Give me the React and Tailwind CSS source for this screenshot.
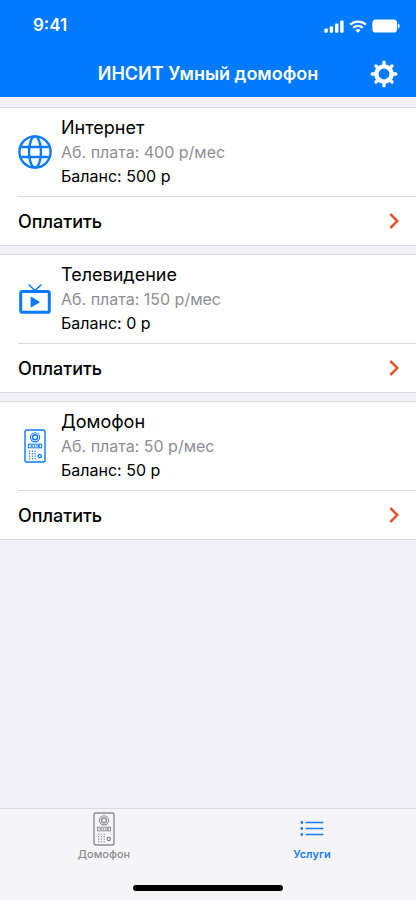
const services = [
  { id: "internet", name: "Интернет", fee: "400 р/мес", balance: "500 р" },
  { id: "tv", name: "Телевидение", fee: "150 р/мес", balance: "0 р" },
  { id: "intercom", name: "Домофон", fee: "50 р/мес", balance: "50 р" },
];

const GlobeIcon = () => (
  <svg width="34" height="34" viewBox="0 0 34 34" fill="none" stroke="currentColor" strokeWidth="2.4">
    <circle cx="17" cy="17" r="15.6" />
    <ellipse cx="17" cy="17" rx="6" ry="15.6" />
    <path d="M3.2 12h27.6M3.2 22h27.6" />
  </svg>
);

const TvIcon = () => (
  <svg width="34" height="34" viewBox="0 0 34 34" fill="none" stroke="currentColor">
    <path d="M11 3l6 5.5L23 3" strokeWidth="1.6" strokeLinecap="round" />
    <rect x="2.7" y="9.5" width="28.6" height="20.8" rx="1.6" strokeWidth="3" />
    <path d="M13.4 15.8v8.6l7.4-4.3z" fill="currentColor" strokeWidth="1.6" strokeLinejoin="round" />
  </svg>
);

const IntercomIcon = () => (
  <svg width="22" height="34" viewBox="0 0 22 34" fill="none" stroke="currentColor">
    <rect x="1" y="1" width="20" height="32" rx="1.8" strokeWidth="1.4" />
    <circle cx="11" cy="8.3" r="4.6" strokeWidth="1.1" />
    <circle cx="11" cy="8.3" r="2.5" strokeWidth="1.4" />
    <rect x="4.4" y="15.2" width="13.2" height="3.6" strokeWidth="1" />
    <path d="M6.6 17h2.2M9.8 17h1.4M12.4 17h1.2M15 15.4v3.2" strokeWidth="1.6" />
    <path
      d="M5.6 21.6v9M8.4 21.6v9M11.2 21.6v9"
      strokeWidth="1.2"
      strokeDasharray="1.2 1.3"
    />
    <circle cx="15.8" cy="27" r="1.6" strokeWidth="1.3" />
  </svg>
);

const ListIcon = () => (
  <svg width="24" height="34" viewBox="0 0 24 34" fill="none" stroke="currentColor" strokeLinecap="round">
    <path d="M6.2 10.5h16.6M6.2 16.5h16.6M6.2 22.5h16.6" strokeWidth="1.6" />
    <path d="M1.8 10.5h.01M1.8 16.5h.01M1.8 22.5h.01" strokeWidth="2.8" />
  </svg>
);

const GearIcon = () => (
  <svg width="28" height="28" viewBox="0 0 28 28" fill="none" stroke="currentColor">
    <circle cx="14" cy="14" r="7.6" strokeWidth="4.4" />
    <path
      d="M14 5V2.2M14 23v2.8M5 14H2.2M23 14h2.8M7.6 7.6L6 6M20.4 7.6L22 6M7.6 20.4L6 22M20.4 20.4L22 22"
      strokeWidth="3.4"
      strokeLinecap="round"
    />
  </svg>
);

const ChevronIcon = () => (
  <svg width="12" height="18" viewBox="0 0 12 18" fill="none" stroke="currentColor" strokeWidth="2.5">
    <path d="M2.3 2L9.3 9l-7 7" />
  </svg>
);

const SignalIcon = () => (
  <svg width="20" height="13" viewBox="0 0 20 13" fill="currentColor">
    <rect x="0.4" y="8.6" width="3.4" height="4.2" rx="1" />
    <rect x="5.7" y="6.2" width="3.4" height="6.6" rx="1" />
    <rect x="11" y="3.6" width="3.4" height="9.2" rx="1" />
    <rect x="16.2" y="0.6" width="3.4" height="12.2" rx="1" />
  </svg>
);

const WifiIcon = () => (
  <svg width="18" height="13" viewBox="0 0 18 13" fill="none" stroke="currentColor" strokeWidth="2.3">
    <path d="M1.2 4.7a11.2 11.2 0 0 1 15.6 0" />
    <path d="M4.2 7.8a6.8 6.8 0 0 1 9.6 0" />
    <path d="M9 12.8L6.4 10.2a3.7 3.7 0 0 1 5.2 0z" fill="currentColor" stroke="none" />
  </svg>
);

const BatteryIcon = () => (
  <svg width="28" height="14" viewBox="0 0 28 14" fill="currentColor">
    <rect x="0.3" y="0.5" width="24.8" height="13" rx="3.6" />
    <path d="M26.1 4.6a2.6 2.6 0 0 1 0 4.8z" />
  </svg>
);

const serviceIcons = {
  internet: <GlobeIcon />,
  tv: <TvIcon />,
  intercom: <IntercomIcon />,
};

const Header = () => (
  <header className="bg-[#007aff] pb-0.5 text-white">
    <div className="flex h-[52px] items-center justify-between pl-[33px] pr-4 text-[17px] font-semibold">
      <span>9:41</span>
      <div className="flex items-center gap-[5px]">
        <SignalIcon />
        <WifiIcon />
        <BatteryIcon />
      </div>
    </div>
    <div className="grid h-[43px] grid-cols-[28px_1fr_28px] items-center px-[18px]">
      <h1 className="col-start-2 text-center text-[18px] font-semibold">
        ИНСИТ Умный домофон
      </h1>
      <button type="button" aria-label="Настройки">
        <GearIcon />
      </button>
    </div>
  </header>
);

const ServiceCard = ({ service }) => (
  <section className="border-y border-[#d9d9de] bg-white pl-[18px]">
    <div className="flex h-[89px] items-center border-b border-[#dcdce0]">
      <div className="flex w-[34px] justify-center text-[#0a7aff]">
        {serviceIcons[service.id]}
      </div>
      <div className="pl-[9px]">
        <h2 className="text-[18px] leading-6">{service.name}</h2>
        <p className="text-[16px] leading-6 text-[#8e8e93]">
          Аб. плата: {service.fee}
        </p>
        <p className="text-[16px] leading-6">Баланс: {service.balance}</p>
      </div>
    </div>
    <button
      type="button"
      className="flex h-12 w-full items-center justify-between pr-4 text-[18px] font-medium"
    >
      Оплатить
      <span className="text-[#e4572e]">
        <ChevronIcon />
      </span>
    </button>
  </section>
);

const TabBar = () => (
  <nav className="border-t border-[#dcdce1] bg-[#f5f5f7] pb-[9px]">
    <div className="grid h-[76px] grid-cols-2 text-[11px] font-medium">
      <a href="#intercom" className="flex flex-col items-center pt-[3px] text-[#8e8e93]">
        <IntercomIcon />
        <span className="leading-4">Домофон</span>
      </a>
      <a href="#services" className="flex flex-col items-center pt-[3px] text-[#1a7cf5]">
        <ListIcon />
        <span className="font-semibold leading-4">Услуги</span>
      </a>
    </div>
    <div className="mx-auto h-[6px] w-[150px] rounded-full bg-black" />
  </nav>
);

const App = () => (
  <div className="flex min-h-screen flex-col bg-[#f1f1f7] font-['Inter',sans-serif] text-black">
    <Header />
    <main className="flex flex-1 flex-col gap-2 pt-[10px]">
      {services.map((service) => (
        <ServiceCard key={service.id} service={service} />
      ))}
    </main>
    <TabBar />
  </div>
);

export default App;
